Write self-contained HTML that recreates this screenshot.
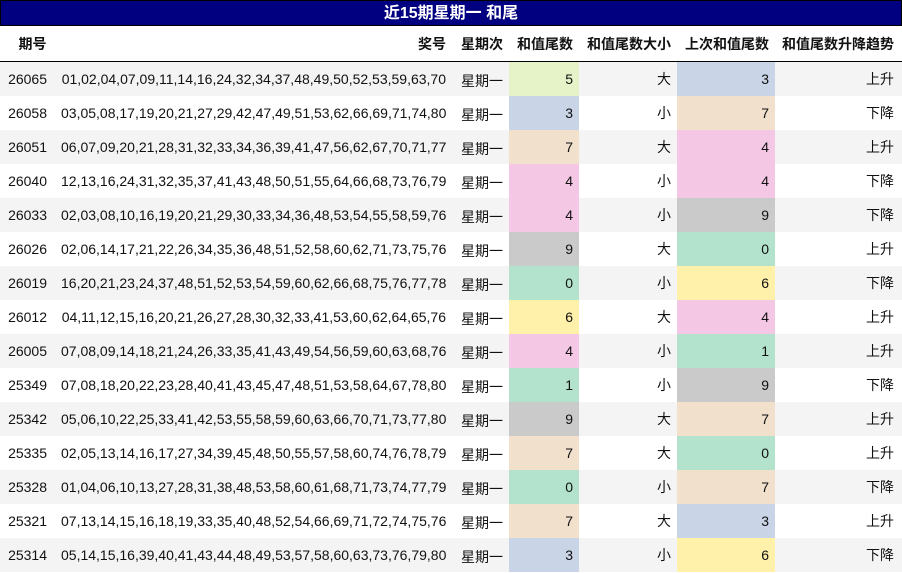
<!DOCTYPE html><html><head><meta charset="utf-8"><style>
body{margin:0;width:902px;height:573px;overflow:hidden;background:#fff;font-family:"Liberation Sans","Noto Sans CJK SC",sans-serif;font-size:14px;color:#111}
.t{height:24px;background:#000080;border:1px solid #000;color:#fff;font-weight:bold;font-size:16px;text-align:center;line-height:25px}
table{border-collapse:collapse;table-layout:fixed;width:902px}
th{height:35px;font-weight:bold;text-align:right;padding:0 6px;border-bottom:1px solid #000;font-size:14px}
td{height:34px;padding:0 6px;text-align:right;white-space:nowrap}
tr.o td{background:#f4f4f4}
td:first-child{padding:0 8px 0 0}
th:last-child{padding-right:8px}
td:last-child{padding-right:8px}
td.w{padding-top:4px;height:30px}
.a{background:#e6f2c8!important}.b{background:#c9d4e6!important}.c7{background:#f0e0cc!important}.d{background:#f4c8e4!important}.e{background:#cacaca!important}.f{background:#b3e3cc!important}.g{background:#fff0aa!important}
</style></head><body>
<div class="t">近15期星期一 和尾</div>
<table>
<colgroup><col style="width:55px"><col style="width:397px"><col style="width:57px"><col style="width:70px"><col style="width:98px"><col style="width:98px"><col style="width:127px"></colgroup>
<tr><th style="text-align:center;padding-left:10px;padding-right:0">期号</th><th>奖号</th><th>星期次</th><th>和值尾数</th><th>和值尾数大小</th><th>上次和值尾数</th><th>和值尾数升降趋势</th></tr>
<tr class="o"><td>26065</td><td>01,02,04,07,09,11,14,16,24,32,34,37,48,49,50,52,53,59,63,70</td><td class="w">星期一</td><td class="a">5</td><td>大</td><td class="b">3</td><td>上升</td></tr>
<tr><td>26058</td><td>03,05,08,17,19,20,21,27,29,42,47,49,51,53,62,66,69,71,74,80</td><td class="w">星期一</td><td class="b">3</td><td>小</td><td class="c7">7</td><td>下降</td></tr>
<tr class="o"><td>26051</td><td>06,07,09,20,21,28,31,32,33,34,36,39,41,47,56,62,67,70,71,77</td><td class="w">星期一</td><td class="c7">7</td><td>大</td><td class="d">4</td><td>上升</td></tr>
<tr><td>26040</td><td>12,13,16,24,31,32,35,37,41,43,48,50,51,55,64,66,68,73,76,79</td><td class="w">星期一</td><td class="d">4</td><td>小</td><td class="d">4</td><td>下降</td></tr>
<tr class="o"><td>26033</td><td>02,03,08,10,16,19,20,21,29,30,33,34,36,48,53,54,55,58,59,76</td><td class="w">星期一</td><td class="d">4</td><td>小</td><td class="e">9</td><td>下降</td></tr>
<tr><td>26026</td><td>02,06,14,17,21,22,26,34,35,36,48,51,52,58,60,62,71,73,75,76</td><td class="w">星期一</td><td class="e">9</td><td>大</td><td class="f">0</td><td>上升</td></tr>
<tr class="o"><td>26019</td><td>16,20,21,23,24,37,48,51,52,53,54,59,60,62,66,68,75,76,77,78</td><td class="w">星期一</td><td class="f">0</td><td>小</td><td class="g">6</td><td>下降</td></tr>
<tr><td>26012</td><td>04,11,12,15,16,20,21,26,27,28,30,32,33,41,53,60,62,64,65,76</td><td class="w">星期一</td><td class="g">6</td><td>大</td><td class="d">4</td><td>上升</td></tr>
<tr class="o"><td>26005</td><td>07,08,09,14,18,21,24,26,33,35,41,43,49,54,56,59,60,63,68,76</td><td class="w">星期一</td><td class="d">4</td><td>小</td><td class="f">1</td><td>上升</td></tr>
<tr><td>25349</td><td>07,08,18,20,22,23,28,40,41,43,45,47,48,51,53,58,64,67,78,80</td><td class="w">星期一</td><td class="f">1</td><td>小</td><td class="e">9</td><td>下降</td></tr>
<tr class="o"><td>25342</td><td>05,06,10,22,25,33,41,42,53,55,58,59,60,63,66,70,71,73,77,80</td><td class="w">星期一</td><td class="e">9</td><td>大</td><td class="c7">7</td><td>上升</td></tr>
<tr><td>25335</td><td>02,05,13,14,16,17,27,34,39,45,48,50,55,57,58,60,74,76,78,79</td><td class="w">星期一</td><td class="c7">7</td><td>大</td><td class="f">0</td><td>上升</td></tr>
<tr class="o"><td>25328</td><td>01,04,06,10,13,27,28,31,38,48,53,58,60,61,68,71,73,74,77,79</td><td class="w">星期一</td><td class="f">0</td><td>小</td><td class="c7">7</td><td>下降</td></tr>
<tr><td>25321</td><td>07,13,14,15,16,18,19,33,35,40,48,52,54,66,69,71,72,74,75,76</td><td class="w">星期一</td><td class="c7">7</td><td>大</td><td class="b">3</td><td>上升</td></tr>
<tr class="o"><td>25314</td><td>05,14,15,16,39,40,41,43,44,48,49,53,57,58,60,63,73,76,79,80</td><td class="w">星期一</td><td class="b">3</td><td>小</td><td class="g">6</td><td>下降</td></tr>
</table></body></html>
